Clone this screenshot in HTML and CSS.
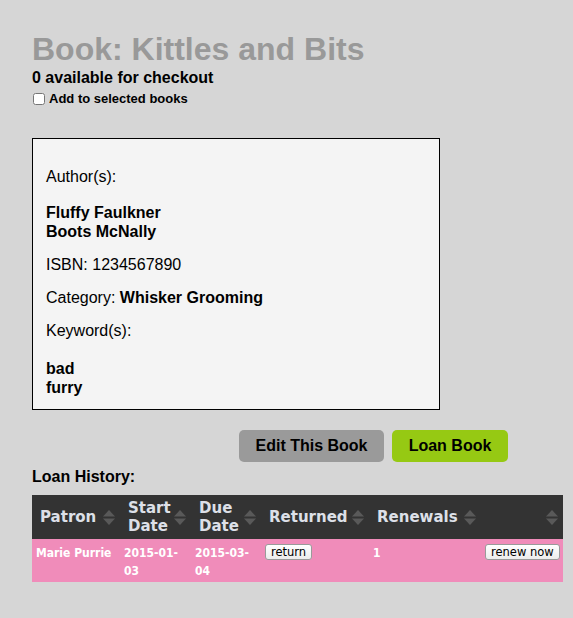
FILE: index.html
```html
<!DOCTYPE html>
<html>
<head>
<meta charset="utf-8">
<title>Book: Kittles and Bits</title>
<link rel="stylesheet" href="styles.css">
</head>
<body>
<div class="page">
  <h1 class="title">Book: Kittles and Bits</h1>
  <div class="avail">0 available for checkout</div>
  <label class="addsel"><input type="checkbox" class="chk"> Add to selected books</label>

  <div class="info">
    <p class="label">Author(s):</p>
    <div class="list">Fluffy Faulkner<br>Boots McNally</div>
    <p class="label">ISBN: 1234567890</p>
    <p class="label">Category: <b>Whisker Grooming</b></p>
    <p class="label">Keyword(s):</p>
    <div class="list list-kw">bad<br>furry</div>
  </div>

  <div class="actions">
    <button class="btn btn-edit">Edit This Book</button>
    <button class="btn btn-loan">Loan Book</button>
  </div>

  <div class="hist-title">Loan History:</div>

  <table class="loans">
    <colgroup>
      <col class="c1"><col class="c2"><col class="c3"><col class="c4"><col class="c5"><col class="c6">
    </colgroup>
    <thead>
      <tr>
        <th><div class="th-in"><span>Patron</span><svg class="sort" viewBox="0 0 12 15" width="12" height="15"><polygon points="6,0 12,6.5 0,6.5"/><polygon points="0,8.5 12,8.5 6,15"/></svg></div></th>
        <th><div class="th-in"><span>Start Date</span><svg class="sort" viewBox="0 0 12 15" width="12" height="15"><polygon points="6,0 12,6.5 0,6.5"/><polygon points="0,8.5 12,8.5 6,15"/></svg></div></th>
        <th><div class="th-in"><span>Due Date</span><svg class="sort" viewBox="0 0 12 15" width="12" height="15"><polygon points="6,0 12,6.5 0,6.5"/><polygon points="0,8.5 12,8.5 6,15"/></svg></div></th>
        <th><div class="th-in"><span>Returned</span><svg class="sort" viewBox="0 0 12 15" width="12" height="15"><polygon points="6,0 12,6.5 0,6.5"/><polygon points="0,8.5 12,8.5 6,15"/></svg></div></th>
        <th><div class="th-in"><span>Renewals</span><svg class="sort" viewBox="0 0 12 15" width="12" height="15"><polygon points="6,0 12,6.5 0,6.5"/><polygon points="0,8.5 12,8.5 6,15"/></svg></div></th>
        <th><div class="th-in"><span></span><svg class="sort" viewBox="0 0 12 15" width="12" height="15"><polygon points="6,0 12,6.5 0,6.5"/><polygon points="0,8.5 12,8.5 6,15"/></svg></div></th>
      </tr>
    </thead>
    <tbody>
      <tr>
        <td>Marie Purrie</td>
        <td>2015-01-<wbr>03</td>
        <td>2015-03-<wbr>04</td>
        <td><button class="mini">return</button></td>
        <td>1</td>
        <td class="right"><button class="mini">renew now</button></td>
      </tr>
    </tbody>
  </table>
</div>
</body>
</html>
```

FILE: styles.css
```css
html, body {
  margin: 0;
  padding: 0;
  background: #d6d6d6;
}

body {
  font-family: "Liberation Sans", Arial, sans-serif;
  color: #000;
}

.page {
  padding: 31px 0 40px 32px;
}

.title {
  margin: 0;
  font-size: 32px;
  line-height: 37px;
  font-weight: bold;
  color: #999;
}

.avail {
  margin-top: 1px;
  font-size: 16px;
  line-height: 18px;
  font-weight: bold;
}

.addsel {
  display: flex;
  align-items: center;
  margin-top: 4px;
  font-size: 13px;
  line-height: 16px;
  font-weight: bold;
}

.chk {
  width: 12px;
  height: 12px;
  margin: 0 4px 0 1px;
}

.info {
  box-sizing: border-box;
  width: 408px;
  margin-top: 31px;
  border: 1px solid #000;
  background: #f4f4f4;
  padding: 12px 13px 12px;
  font-size: 16px;
}

.info .label {
  margin: 15px 0;
  line-height: 18px;
}

.info .label:first-child {
  margin-top: 17px;
}

.info .list {
  margin: 17px 0 15px;
  line-height: 19px;
  font-weight: bold;
}

.info .list-kw {
  margin-top: 19px;
  margin-bottom: 0;
}

.actions {
  display: flex;
  justify-content: flex-end;
  gap: 8px;
  width: 476px;
  margin-top: 20px;
}

.btn {
  height: 32px;
  padding: 0 16px;
  border: none;
  border-radius: 5px;
  font-family: "Liberation Sans", Arial, sans-serif;
  font-size: 16px;
  font-weight: bold;
  color: #000;
}

.btn-edit {
  width: 145px;
  background: #9a9a9a;
}

.btn-loan {
  width: 116px;
  background: #96c913;
}

.hist-title {
  margin-top: 6px;
  font-size: 16px;
  line-height: 18px;
  font-weight: bold;
}

.loans {
  margin-top: 9px;
  width: 531px;
  table-layout: fixed;
  border-collapse: collapse;
  font-family: "DejaVu Sans", Verdana, sans-serif;
}

.c1 { width: 88px; }
.c2 { width: 71px; }
.c3 { width: 70px; }
.c4 { width: 108px; }
.c5 { width: 112px; }
.c6 { width: 82px; }

.loans th {
  height: 44px;
  padding: 0 5px 0 8px;
  background: #333;
  color: #dde0e8;
  font-size: 15px;
  line-height: 18px;
  font-weight: bold;
  text-align: left;
  vertical-align: middle;
}

.th-in {
  display: flex;
  align-items: center;
  justify-content: space-between;
  gap: 3px;
}

.sort {
  flex: none;
  fill: #595959;
}

.loans td {
  padding: 5px 2px 2px 4px;
  background: #f08cba;
  color: #fff;
  font-family: "DejaVu Sans Condensed", "DejaVu Sans", Verdana, sans-serif;
  font-size: 12px;
  line-height: 18px;
  font-weight: bold;
  vertical-align: top;
}

.loans td.right {
  text-align: right;
  padding-right: 5px;
}

.mini {
  height: 16px;
  padding: 0 5px;
  border: 1px solid #9a9a9a;
  border-radius: 3px;
  background: linear-gradient(#ffffff, #ececec);
  font-family: "DejaVu Sans", Verdana, sans-serif;
  font-size: 11.5px;
  line-height: 14px;
  font-weight: normal;
  color: #000;
  white-space: nowrap;
  vertical-align: top;
}
```
